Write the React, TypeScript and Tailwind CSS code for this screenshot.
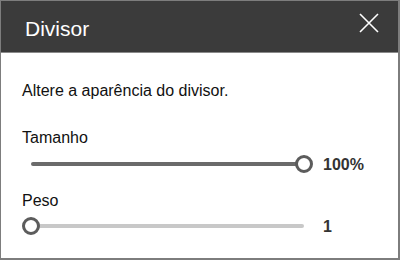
import React from "react";

function Slider({ value, dark }: { value: number; dark: boolean }) {
  return (
    <div className="relative w-[291px] h-[20px]">
      <div
        className={`absolute left-[9px] right-[9px] top-[8px] h-[4px] rounded-full ${dark ? "bg-[#6b6b6b]" : "bg-[#c8c8c8]"}`}
      />
      <div
        className="absolute top-[1px] w-[18px] h-[18px] rounded-full border-[3px] border-[#5c5c5c] bg-white box-border"
        style={{ left: `${value * 273}px` }}
      />
    </div>
  );
}

export default function App() {
  return (
    <div
      className="w-[400px] h-[260px] bg-white border-l border-t border-r-2 border-b-2 border-[#7d7d7d] flex flex-col box-border"
      style={{ fontFamily: '"Liberation Sans", Arial, sans-serif' }}
    >
      <div className="h-[52px] bg-[#3b3b3b] border-b border-[#8a8a8a] flex justify-between items-start pl-[24px] pr-[19px] shrink-0">
        <div className="text-[21px] leading-[24px] text-white pt-[16px]">Divisor</div>
        <svg width="20" height="20" viewBox="0 0 20 20" className="mt-[12px]">
          <path d="M1 1 L19 19 M19 1 L1 19" stroke="white" strokeWidth="1.6" fill="none" />
        </svg>
      </div>
      <div className="flex flex-col pl-[21px]">
        <div className="mt-[28px] text-[16px] leading-[20px] text-[#111]">Altere a aparência do divisor.</div>
        <div className="mt-[27px] text-[16px] leading-[20px] text-[#111]">Tamanho</div>
        <div className="mt-[4px] flex items-center">
          <Slider value={1} dark={true} />
          <div className="ml-[10px] text-[16px] leading-[20px] text-[#333] font-semibold mt-[3px]">100%</div>
        </div>
        <div className="mt-[16px] text-[16px] leading-[20px] text-[#111]">Peso</div>
        <div className="mt-[4px] flex items-center">
          <Slider value={0} dark={false} />
          <div className="ml-[10px] text-[16px] leading-[20px] text-[#333] font-semibold mt-[2px]">1</div>
        </div>
      </div>
    </div>
  );
}
